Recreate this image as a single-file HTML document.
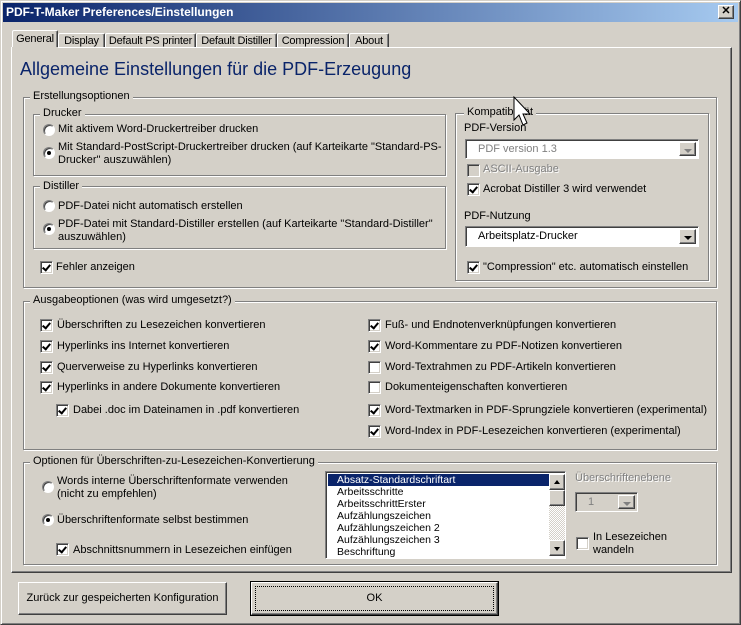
<!DOCTYPE html>
<html><head><meta charset="utf-8"><style>
*{margin:0;padding:0;box-sizing:border-box}
body{width:741px;height:625px;background:#d4d0c8;font:11px "Liberation Sans",sans-serif;color:#000;position:relative;overflow:hidden}
.a{position:absolute}
.t{position:absolute;white-space:nowrap;line-height:13px}
.win{left:0;top:0;width:741px;height:625px;border:1px solid;border-color:#d4d0c8 #404040 #404040 #d4d0c8;box-shadow:inset 1px 1px #fff,inset -1px -1px #808080}
.title{left:3px;top:3px;width:735px;height:19px;background:linear-gradient(90deg,#0a246a,#a6caf0);color:#fff;font-weight:bold;font-size:12px;padding:2px 0 0 3px}
.xb{left:718px;top:5px;width:16px;height:14px;background:#d4d0c8;border:1px solid;border-color:#fff #404040 #404040 #fff;box-shadow:inset -1px -1px #808080;font:bold 11px "Liberation Sans";text-align:center;line-height:11px;color:#000}
.panel{left:11px;top:47px;width:721px;height:526px;border:1px solid;border-color:#fff #404040 #404040 #fff;box-shadow:inset -1px -1px #808080}
.tab{position:absolute;top:33px;height:15px;border:1px solid;border-bottom:none;border-color:#fff #404040 #fff #fff;box-shadow:inset -1px 0 #808080;border-radius:2px 2px 0 0;padding-top:1px;text-align:center;white-space:nowrap;background:#d4d0c8;letter-spacing:-0.2px}
.tab.sel{top:30px;height:19px;padding-top:2px;z-index:2}
.g{position:absolute;border:1px solid #808080;box-shadow:1px 1px #fff,inset 1px 1px #fff}
.gl{position:absolute;background:#d4d0c8;padding:0 3px;line-height:13px;white-space:nowrap}
.cb{position:absolute;width:13px;height:13px;background:#fff;border:1px solid;border-color:#808080 #fff #fff #808080;box-shadow:inset 1px 1px #404040,inset -1px -1px #d4d0c8}
.cb.on::after{content:"";position:absolute;left:3px;top:1px;width:3px;height:6px;border:solid #000;border-width:0 2px 2px 0;transform:rotate(40deg)}
.cb.dis{background:#d4d0c8}
.rb{position:absolute;width:12px;height:12px;border-radius:50%;background:#fff;border:1px solid;border-color:#808080 #fff #fff #808080;box-shadow:inset 1px 1px #404040}
.rb.on::after{content:"";position:absolute;left:3px;top:3px;width:4px;height:4px;border-radius:50%;background:#000}
.btn{position:absolute;border:1px solid;border-color:#fff #404040 #404040 #fff;box-shadow:inset -1px -1px #808080;text-align:center}
.combo{position:absolute;background:#fff;border:1px solid;border-color:#808080 #fff #fff #808080;box-shadow:inset 1px 1px #404040;padding:3px 0 0 12px}
.arr{position:absolute;top:2px;right:2px;width:17px;bottom:2px;background:#d4d0c8;border:1px solid;border-color:#fff #404040 #404040 #fff;box-shadow:inset -1px -1px #808080}
.arr::after{content:"";position:absolute;left:4px;top:6px;border:4px solid transparent;border-top:4px solid #000;border-bottom:none}
.arr.dis::after{border-top-color:#808080}
.dis{color:#808080}
</style></head><body>
<div class="a win"></div>
<div class="a title">PDF-T-Maker Preferences/Einstellungen</div>
<div class="a xb">✕</div>

<div class="tab sel" style="left:12px;width:46px">General</div>
<div class="tab" style="left:58px;width:47px">Display</div>
<div class="tab" style="left:105px;width:91px">Default PS printer</div>
<div class="tab" style="left:196px;width:81px">Default Distiller</div>
<div class="tab" style="left:277px;width:72px">Compression</div>
<div class="tab" style="left:349px;width:40px">About</div>
<div class="a panel"></div>
<div class="a" style="left:12px;top:47px;width:46px;height:2px;background:#d4d0c8;z-index:3"></div>

<div class="t" style="left:20px;top:58px;font-size:18px;line-height:22px;color:#0a246a">Allgemeine Einstellungen für die PDF-Erzeugung</div>

<div class="g" style="left:23px;top:97px;width:694px;height:191px"></div>
<div class="gl" style="left:30px;top:90px">Erstellungsoptionen</div>
<div class="g" style="left:33px;top:114px;width:413px;height:62px"></div>
<div class="gl" style="left:40px;top:107px">Drucker</div>
<div class="rb" style="left:43px;top:124px"></div><div class="t" style="left:58px;top:123px">Mit aktivem Word-Druckertreiber drucken</div>
<div class="rb on" style="left:43px;top:147px"></div><div class="t" style="left:58px;top:141px">Mit Standard-PostScript-Druckertreiber drucken (auf Karteikarte "Standard-PS-<br>Drucker" auszuwählen)</div>
<div class="g" style="left:33px;top:186px;width:413px;height:63px"></div>
<div class="gl" style="left:40px;top:180px">Distiller</div>
<div class="rb" style="left:43px;top:200px"></div><div class="t" style="left:58px;top:200px">PDF-Datei nicht automatisch erstellen</div>
<div class="rb on" style="left:43px;top:223px"></div><div class="t" style="left:58px;top:218px">PDF-Datei mit Standard-Distiller erstellen (auf Karteikarte "Standard-Distiller"<br>auszuwählen)</div>
<div class="cb on" style="left:40px;top:261px"></div><div class="t" style="left:56px;top:261px">Fehler anzeigen</div>

<div class="g" style="left:455px;top:113px;width:254px;height:168px"></div>
<div class="gl" style="left:464px;top:106px">Kompatibilität</div>
<div class="t" style="left:464px;top:122px">PDF-Version</div>
<div class="combo dis" style="left:465px;top:139px;width:234px;height:20px">PDF version 1.3<div class="arr dis"></div></div>
<div class="cb dis" style="left:467px;top:164px"></div><div class="t dis" style="left:483px;top:163px;text-shadow:1px 1px #fff">ASCII-Ausgabe</div>
<div class="cb on" style="left:467px;top:183px"></div><div class="t" style="left:483px;top:183px">Acrobat Distiller 3 wird verwendet</div>
<div class="t" style="left:464px;top:210px">PDF-Nutzung</div>
<div class="combo" style="left:465px;top:226px;width:234px;height:21px">Arbeitsplatz-Drucker<div class="arr"></div></div>
<div class="cb on" style="left:467px;top:261px"></div><div class="t" style="left:483px;top:261px">"Compression" etc. automatisch einstellen</div>

<svg class="a" style="left:513px;top:96px" width="24" height="34" viewBox="0 0 24 34"><path d="M1 1 L1 24 L6 19 L10 29 L14 27 L10 18 L17 18 Z" fill="#fff" stroke="#000" stroke-width="1"/></svg>

<div class="g" style="left:23px;top:301px;width:694px;height:149px"></div>
<div class="gl" style="left:30px;top:294px">Ausgabeoptionen (was wird umgesetzt?)</div>
<div class="cb on" style="left:40px;top:319px"></div><div class="t" style="left:57px;top:319px">Überschriften zu Lesezeichen konvertieren</div>
<div class="cb on" style="left:40px;top:340px"></div><div class="t" style="left:57px;top:340px">Hyperlinks ins Internet konvertieren</div>
<div class="cb on" style="left:40px;top:361px"></div><div class="t" style="left:57px;top:361px">Querverweise zu Hyperlinks konvertieren</div>
<div class="cb on" style="left:40px;top:381px"></div><div class="t" style="left:57px;top:381px">Hyperlinks in andere Dokumente konvertieren</div>
<div class="cb on" style="left:56px;top:404px"></div><div class="t" style="left:73px;top:404px">Dabei .doc im Dateinamen in .pdf konvertieren</div>
<div class="cb on" style="left:368px;top:319px"></div><div class="t" style="left:385px;top:319px">Fuß- und Endnotenverknüpfungen konvertieren</div>
<div class="cb on" style="left:368px;top:340px"></div><div class="t" style="left:385px;top:340px">Word-Kommentare zu PDF-Notizen konvertieren</div>
<div class="cb" style="left:368px;top:361px"></div><div class="t" style="left:385px;top:361px">Word-Textrahmen zu PDF-Artikeln konvertieren</div>
<div class="cb" style="left:368px;top:381px"></div><div class="t" style="left:385px;top:381px">Dokumenteigenschaften konvertieren</div>
<div class="cb on" style="left:368px;top:404px"></div><div class="t" style="left:385px;top:404px">Word-Textmarken in PDF-Sprungziele konvertieren (experimental)</div>
<div class="cb on" style="left:368px;top:425px"></div><div class="t" style="left:385px;top:425px">Word-Index in PDF-Lesezeichen konvertieren (experimental)</div>

<div class="g" style="left:23px;top:462px;width:694px;height:103px"></div>
<div class="gl" style="left:30px;top:455px">Optionen für Überschriften-zu-Lesezeichen-Konvertierung</div>
<div class="rb" style="left:42px;top:481px"></div><div class="t" style="left:57px;top:475px">Words interne Überschriftenformate verwenden<br>(nicht zu empfehlen)</div>
<div class="rb on" style="left:42px;top:514px"></div><div class="t" style="left:57px;top:514px">Überschriftenformate selbst bestimmen</div>
<div class="cb on" style="left:56px;top:543px"></div><div class="t" style="left:73px;top:544px">Abschnittsnummern in Lesezeichen einfügen</div>

<div class="a" style="left:325px;top:471px;width:241px;height:88px;background:#fff;border:1px solid;border-color:#808080 #fff #fff #808080;box-shadow:inset 1px 1px #404040;overflow:hidden">
 <div style="position:absolute;left:2px;top:2px;width:221px;line-height:12px;font-size:10.5px">
  <div style="background:#0a246a;color:#fff;padding-left:9px">Absatz-Standardschriftart</div>
  <div style="padding-left:9px">Arbeitsschritte</div>
  <div style="padding-left:9px">ArbeitsschrittErster</div>
  <div style="padding-left:9px">Aufzählungszeichen</div>
  <div style="padding-left:9px">Aufzählungszeichen 2</div>
  <div style="padding-left:9px">Aufzählungszeichen 3</div>
  <div style="padding-left:9px">Beschriftung</div>
 </div>
 <div style="position:absolute;left:223px;top:2px;width:16px;height:82px;background:repeating-conic-gradient(#fff 0 25%,#d4d0c8 0 50%) 0 0/2px 2px">
  <div class="btn" style="position:absolute;left:0;top:0;width:16px;height:16px;background:#d4d0c8"><div style="position:absolute;left:4px;top:5px;border:3.5px solid transparent;border-bottom:4px solid #000;border-top:none"></div></div>
  <div class="btn" style="position:absolute;left:0;top:16px;width:16px;height:16px;background:#d4d0c8"></div>
  <div class="btn" style="position:absolute;left:0;top:66px;width:16px;height:16px;background:#d4d0c8"><div style="position:absolute;left:4px;top:6px;border:3.5px solid transparent;border-top:4px solid #000;border-bottom:none"></div></div>
 </div>
</div>
<div class="t dis" style="left:575px;top:472px;text-shadow:1px 1px #fff">Überschriftenebene</div>
<div class="combo dis" style="left:575px;top:492px;width:63px;height:20px;padding-left:12px;background:#d4d0c8">1<div class="arr dis"></div></div>
<div class="cb" style="left:576px;top:537px"></div><div class="t" style="left:593px;top:531px">In Lesezeichen<br>wandeln</div>

<div class="btn" style="left:18px;top:582px;width:209px;height:33px;line-height:31px">Zurück zur gespeicherten Konfiguration</div>
<div class="a" style="left:250px;top:581px;width:249px;height:35px;border:1px solid #000"></div>
<div class="btn" style="left:251px;top:582px;width:247px;height:33px;line-height:31px"><div style="position:absolute;left:3px;top:3px;right:3px;bottom:3px;border:1px dotted #000"></div>OK</div>
</body></html>
